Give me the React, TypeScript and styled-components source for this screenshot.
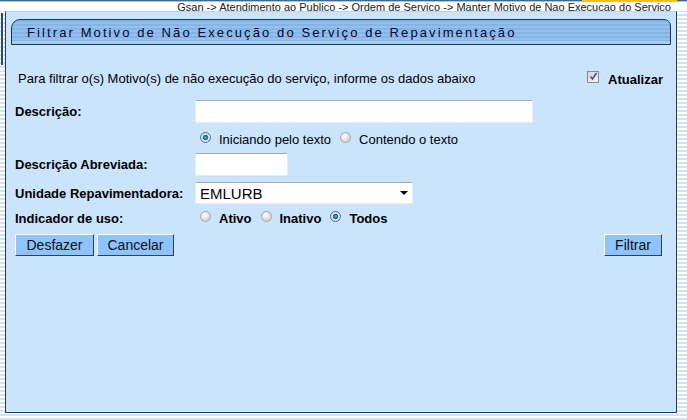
import styled, { createGlobalStyle } from "styled-components";

const colors = {
  panel: "#cae4fd",
  navy: "#1f3a5a",
  stripe: "#cfe3f4",
  text: "#000",
  title: "#06062e",
  button: "#8ec4fb",
};

const GlobalStyle = createGlobalStyle`
  html, body {
    margin: 0;
    padding: 0;
    background: #fff;
  }
  body {
    font-family: "Liberation Sans", Arial, sans-serif;
  }
`;

export default function App() {
  return (
    <>
      <GlobalStyle />
      <Page>
        <TopBar>
          <Breadcrumb>
            Gsan -&gt; Atendimento ao Publico -&gt; Ordem de Servico -&gt; Manter Motivo de Nao
            Execucao do Servico
          </Breadcrumb>
        </TopBar>
        <Body>
          <FrameEdge />
          <Panel>
            <TitleBar>Filtrar Motivo de Não Execução do Serviço de Repavimentação</TitleBar>

            <IntroRow>
              <Intro>
                Para filtrar o(s) Motivo(s) de não execução do serviço, informe os dados abaixo
              </Intro>
              <CheckLabel>
                <CheckBox>
                  <svg width="9" height="9" viewBox="0 0 9 9">
                    <path d="M1.5 4.5 L3.5 7 L7.5 1" fill="none" stroke="#3a4fb0" strokeWidth="1.6" />
                  </svg>
                </CheckBox>
                Atualizar
              </CheckLabel>
            </IntroRow>

            <Row $top={14} $height={23}>
              <Label>Descrição:</Label>
              <TextField $width={338} />
            </Row>

            <Row $top={8} $height={16}>
              <span />
              <Options>
                <Option>
                  <Radio $checked />
                  Iniciando pelo texto
                </Option>
                <Option>
                  <Radio />
                  Contendo o texto
                </Option>
              </Options>
            </Row>

            <Row $top={6} $height={23}>
              <Label>Descrição Abreviada:</Label>
              <TextField $width={93} />
            </Row>

            <Row $top={6} $height={22}>
              <Label>Unidade Repavimentadora:</Label>
              <Select>
                EMLURB
                <Caret />
              </Select>
            </Row>

            <Row $top={6} $height={16}>
              <Label>Indicador de uso:</Label>
              <Options>
                <Option $bold>
                  <Radio />
                  Ativo
                </Option>
                <Option $bold>
                  <Radio />
                  Inativo
                </Option>
                <Option $bold>
                  <Radio $checked />
                  Todos
                </Option>
              </Options>
            </Row>

            <Actions>
              <ButtonGroup>
                <Button $width={79}>Desfazer</Button>
                <Button $width={77}>Cancelar</Button>
              </ButtonGroup>
              <Button $width={58}>Filtrar</Button>
            </Actions>
          </Panel>
        </Body>
      </Page>
    </>
  );
}

const stripes = `repeating-linear-gradient(
  to bottom,
  #ffffff 0px,
  #ffffff 2px,
  ${colors.stripe} 2px,
  ${colors.stripe} 4px
)`;

const Page = styled.div`
  width: 687px;
  height: 420px;
  overflow: hidden;
  background: ${stripes};
  display: flex;
  flex-direction: column;
`;

const TopBar = styled.div`
  height: 11px;
  background: #fff;
  border-top: 1px solid #3d6890;
  box-shadow: inset 0 1px 0 #a9c4de;
  box-sizing: border-box;
  display: flex;
  justify-content: flex-end;
  padding-right: 16px;
  position: relative;
  z-index: 1;

  &::after {
    content: "";
    position: absolute;
    top: -1px;
    right: 10px;
    width: 95px;
    height: 2px;
    background: #f5c400;
  }
`;

const Breadcrumb = styled.div`
  font-size: 11px;
  line-height: 10px;
  margin-top: 1px;
  color: #222;
  white-space: nowrap;
`;

const Body = styled.div`
  display: flex;
  position: relative;
`;

const FrameEdge = styled.div`
  position: absolute;
  left: 1px;
  top: 2px;
  width: 2px;
  height: 52px;
  background: #2d4c6c;
`;

const Panel = styled.div`
  margin-left: 5px;
  width: 672px;
  height: 402px;
  box-sizing: border-box;
  background: ${colors.panel};
  border: 1px solid ${colors.navy};
  border-top-color: #b9d4ee;
  padding: 7px 5px 0;
  display: flex;
  flex-direction: column;
`;

const TitleBar = styled.div`
  height: 26px;
  box-sizing: border-box;
  border: 1px solid #1b3553;
  border-radius: 9px 7px 0 0;
  background: repeating-linear-gradient(
    to bottom,
    #84b5e6 0px,
    #84b5e6 2px,
    #94c0ec 2px,
    #94c0ec 4px
  );
  box-shadow: inset 0 -3px 0 #a9cdf1;
  padding-left: 15px;
  font-size: 13px;
  letter-spacing: 2.1px;
  color: ${colors.title};
  display: flex;
  align-items: center;
  white-space: nowrap;
`;

const IntroRow = styled.div`
  margin-top: 25px;
  height: 16px;
  display: flex;
  align-items: center;
  justify-content: space-between;
  padding: 0 8px 0 7px;
`;

const Intro = styled.span`
  font-size: 13px;
  color: ${colors.text};
`;

const CheckLabel = styled.label`
  display: flex;
  align-items: center;
  gap: 9px;
  font-size: 13px;
  font-weight: bold;
  color: ${colors.text};
  margin-top: 3px;
`;

const CheckBox = styled.span`
  width: 12px;
  height: 12px;
  box-sizing: border-box;
  border: 1px solid #8c8c8c;
  background: linear-gradient(135deg, #d4d4d4, #f4f4f4);
  display: flex;
  align-items: center;
  justify-content: center;
  margin-top: -6px;
`;

const Row = styled.div<{ $top: number; $height: number }>`
  margin-top: ${(p) => p.$top}px;
  height: ${(p) => p.$height}px;
  display: grid;
  grid-template-columns: 180px 1fr;
  align-items: center;
  padding-left: 4px;
`;

const Label = styled.span`
  font-size: 13px;
  font-weight: bold;
  color: ${colors.text};
  white-space: nowrap;
`;

const TextField = styled.div<{ $width: number }>`
  width: ${(p) => p.$width}px;
  height: 23px;
  box-sizing: border-box;
  background: #fff;
  border: 1px solid #e4ecf4;
  border-top-color: #a9a9a9;
  border-radius: 2px;
`;

const Options = styled.div`
  display: flex;
  align-items: center;
  gap: 9px;
  padding-left: 5px;
`;

const Option = styled.label<{ $bold?: boolean }>`
  display: flex;
  align-items: center;
  gap: 8px;
  font-size: 13px;
  font-weight: ${(p) => (p.$bold ? "bold" : "normal")};
  color: ${colors.text};
  white-space: nowrap;
`;

const Radio = styled.span<{ $checked?: boolean }>`
  width: 11px;
  height: 11px;
  box-sizing: border-box;
  border-radius: 50%;
  border: 1px solid ${(p) => (p.$checked ? "#5a6a7a" : "#a6a6a6")};
  background: ${(p) =>
    p.$checked
      ? "radial-gradient(circle at 50% 50%, #3ea0e8 0, #1466b8 2.4px, #e8e8e8 3.1px, #cfcfcf 100%)"
      : "radial-gradient(circle at 40% 35%, #ffffff 0, #e6e6e6 40%, #c4c4c4 100%)"};
  margin-top: -3px;
`;

const Select = styled.div`
  width: 218px;
  height: 22px;
  box-sizing: border-box;
  background: #fff;
  border: 1px solid #e4ecf4;
  border-top-color: #a9a9a9;
  border-radius: 2px;
  padding-left: 4px;
  padding-right: 4px;
  font-size: 15px;
  color: ${colors.text};
  display: flex;
  align-items: center;
  justify-content: space-between;
`;

const Caret = styled.span`
  width: 0;
  height: 0;
  border-left: 4px solid transparent;
  border-right: 4px solid transparent;
  border-top: 4px solid #000;
`;

const Actions = styled.div`
  margin-top: 8px;
  display: flex;
  justify-content: space-between;
  align-items: center;
  padding: 0 9px 0 4px;
`;

const ButtonGroup = styled.div`
  display: flex;
  gap: 3px;
`;

const Button = styled.button<{ $width: number }>`
  width: ${(p) => p.$width}px;
  height: 22px;
  box-sizing: border-box;
  background: ${colors.button};
  border: 1px solid;
  border-color: #ffffff #27425f #27425f #ffffff;
  font-family: "Liberation Sans", Arial, sans-serif;
  font-size: 14px;
  color: #111;
  padding: 0;
`;
